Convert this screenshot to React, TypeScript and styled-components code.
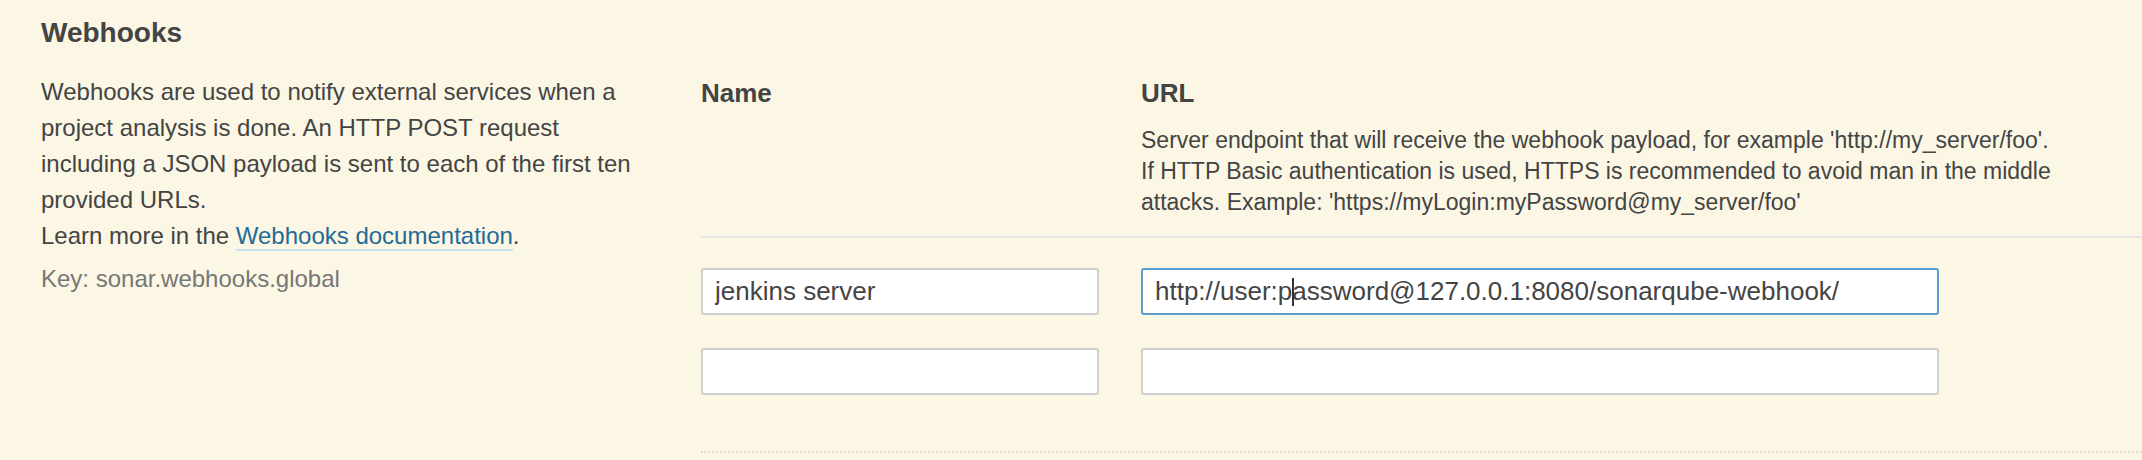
import React from "react";
import styled, { createGlobalStyle } from "styled-components";

const GlobalStyle = createGlobalStyle`
  html, body {
    margin: 0;
    padding: 0;
    background: #fbf7e4;
  }
  body {
    font-family: "Liberation Sans", Arial, Helvetica, sans-serif;
    color: #444;
  }
`;

const Page = styled.div`
  display: flex;
  align-items: flex-start;
  box-sizing: border-box;
  min-height: 460px;
  padding: 17px 0 0 41px;
`;

const Description = styled.div`
  flex: 0 0 610px;
  margin-right: 50px;
`;

const Title = styled.h2`
  margin: 0;
  font-size: 28px;
  line-height: 32px;
  font-weight: bold;
  color: #444;
`;

const Markdown = styled.div`
  margin-top: 25px;
  font-size: 24px;
  line-height: 36px;
  color: #444;
`;

const DocLink = styled.a`
  color: #236a97;
  text-decoration: none;
  border-bottom: 2px solid #cae3f2;
`;

const KeyLine = styled.div`
  margin-top: 7px;
  font-size: 24px;
  line-height: 36px;
  color: #777;
`;

const Field = styled.div`
  flex: 1;
  padding-top: 61px;
`;

const HeaderRow = styled.div`
  display: grid;
  grid-template-columns: 440px 1fr;
  padding-bottom: 18px;
  border-bottom: 2px solid #e6e6e4;
`;

const ColTitle = styled.div`
  font-size: 26px;
  line-height: 30px;
  font-weight: bold;
  color: #444;
`;

const ColHint = styled.div`
  margin-top: 17px;
  font-size: 23px;
  line-height: 31px;
  color: #444;
  white-space: nowrap;
`;

const Rows = styled.div`
  display: flex;
  flex-direction: column;
  gap: 33px;
  padding: 30px 0 56px;
  border-bottom: 2px dotted #dedbd0;
`;

const Row = styled.div`
  display: grid;
  grid-template-columns: 440px 1fr;
`;

const InputWrap = styled.div<{ $width: number }>`
  position: relative;
  width: ${(p) => p.$width}px;
`;

const TextInput = styled.input<{ $focused?: boolean }>`
  box-sizing: border-box;
  display: block;
  width: 100%;
  height: 47px;
  margin: 0;
  padding: 0 12px;
  border: 2px solid ${(p) => (p.$focused ? "#5b9dd0" : "#cfcfcf")};
  border-radius: 3px;
  background: #fff;
  font-family: "Liberation Sans", Arial, Helvetica, sans-serif;
  font-size: 26px;
  color: #444;
  outline: none;
`;

const Caret = styled.span<{ $left: number }>`
  position: absolute;
  left: ${(p) => p.$left}px;
  top: 10px;
  width: 2px;
  height: 28px;
  background: #333;
  pointer-events: none;
`;

const rows = [
  { name: "jenkins server", url: "http://user:password@127.0.0.1:8080/sonarqube-webhook/", focused: true },
  { name: "", url: "", focused: false },
];

export default function App() {
  return (
    <>
      <GlobalStyle />
      <Page>
        <Description>
          <Title>Webhooks</Title>
          <Markdown>
            Webhooks are used to notify external services when a project analysis is done. An HTTP POST
            request including a JSON payload is sent to each of the first ten provided URLs.
            <br />
            Learn more in the <DocLink href="#">Webhooks documentation</DocLink>.
          </Markdown>
          <KeyLine>Key: sonar.webhooks.global</KeyLine>
        </Description>
        <Field>
          <HeaderRow>
            <ColTitle>Name</ColTitle>
            <div>
              <ColTitle>URL</ColTitle>
              <ColHint>
                Server endpoint that will receive the webhook payload, for example 'http://my_server/foo'.
                <br />
                If HTTP Basic authentication is used, HTTPS is recommended to avoid man in the middle
                <br />
                attacks. Example: 'https://myLogin:myPassword@my_server/foo'
              </ColHint>
            </div>
          </HeaderRow>
          <Rows>
            {rows.map((r, i) => (
              <Row key={i}>
                <InputWrap $width={398}>
                  <TextInput type="text" defaultValue={r.name} />
                </InputWrap>
                <InputWrap $width={798}>
                  <TextInput type="text" defaultValue={r.url} $focused={r.focused} />
                  {r.focused && <Caret $left={151} />}
                </InputWrap>
              </Row>
            ))}
          </Rows>
        </Field>
      </Page>
    </>
  );
}
